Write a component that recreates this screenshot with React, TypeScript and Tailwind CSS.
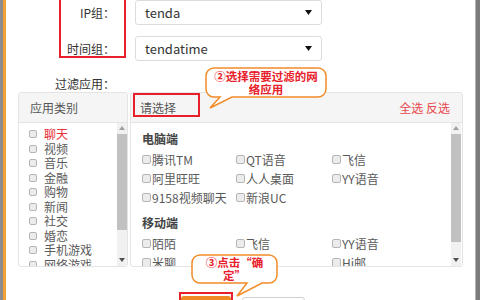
import React from "react";

const pcApps = [
  ["腾讯TM", "QT语音", "飞信"],
  ["阿里旺旺", "人人桌面", "YY语音"],
  ["9158视频聊天", "新浪UC", ""],
];

const mobileApps = [
  ["陌陌", "飞信", "YY语音"],
  ["米聊", "", "Hi邮"],
];

const categories = ["聊天", "视频", "音乐", "金融", "购物", "新闻", "社交", "婚恋", "手机游戏", "网络游戏"];

function Box({ small }: { small?: boolean }) {
  return (
    <span
      className={`inline-block flex-shrink-0 border border-[#b5b5b5] bg-[#ececec] rounded-[2px] ${
        small ? "w-[8px] h-[8px]" : "w-[9px] h-[9px]"
      }`}
    />
  );
}

function Select({ value }: { value: string }) {
  return (
    <div className="ml-[20px] w-[187px] h-[25px] border border-[#dcdcdc] rounded-[3px] px-[9px] flex items-center justify-between text-[13px] text-[#333]">
      <span>{value}</span>
      <svg width="7" height="5" viewBox="0 0 7 5">
        <path d="M0 0 H7 L3.5 5 Z" fill="#111" />
      </svg>
    </div>
  );
}

function ScrollBar({ thumbTop, thumbH }: { thumbTop: number; thumbH: number }) {
  return (
    <div className="relative w-[10px] h-full bg-[#f1f1f1]">
      <svg className="absolute left-[2px] top-[3px]" width="6" height="4" viewBox="0 0 6 4">
        <path d="M0 4 H6 L3 0 Z" fill="#a0a0a0" />
      </svg>
      <div className="absolute left-0 w-[10px] bg-[#c1c1c1]" style={{ top: thumbTop, height: thumbH }} />
      <svg className="absolute left-[2px] bottom-[4px]" width="6" height="4" viewBox="0 0 6 4">
        <path d="M0 0 H6 L3 4 Z" fill="#505050" />
      </svg>
    </div>
  );
}

function AppRows({ rows }: { rows: string[][] }) {
  return (
    <div className="mt-[3px]">
      {rows.map((row, r) => (
        <div key={r} className="flex h-[19px] items-center">
          {row.map((a, i) => (
            <div key={i} className={`flex items-center gap-[1px] ${i === 0 ? "w-[94px]" : "w-[96px]"}`}>
              {a && <Box />}
              <span>{a}</span>
            </div>
          ))}
        </div>
      ))}
    </div>
  );
}

export default function App() {
  return (
    <div className="relative w-[480px] h-[300px] overflow-hidden flex bg-white font-['Noto_Sans_CJK_SC','Liberation_Sans',sans-serif]">
      <div className="w-[3px] bg-[#8c8c8c]" />
      <div className="w-[3px] bg-[#f0a035]" />

      {/* Form */}
      <div className="flex-1 flex flex-col">
        <div className="flex items-center h-[25px]">
          <div className="w-[109px] text-right text-[12px] text-[#333]">IP组：</div>
          <Select value="tenda" />
        </div>
        <div className="flex items-center h-[25px] mt-[11px]">
          <div className="w-[109px] text-right text-[12px] text-[#333]">时间组：</div>
          <Select value="tendatime" />
        </div>
        <div className="mt-[16px] h-[14px] w-[109px] text-right text-[12px] leading-[14px] text-[#333]">过滤应用：</div>

        <div className="flex ml-[12px] mt-[1px] h-[175px]">
          {/* Categories */}
          <div className="w-[110px] border border-[#e4e4e4] rounded-[3px] flex flex-col overflow-hidden">
            <div className="h-[30px] flex-shrink-0 bg-[#f5f5f5] border-b border-[#e4e4e4] flex items-center pl-[11px] text-[12px] text-[#555]">
              应用类别
            </div>
            <div className="flex flex-1 min-h-0">
              <div className="flex-1 pl-[10px] pt-[4px] overflow-hidden">
                {categories.map((c, i) => (
                  <div key={c} className="h-[14.5px] flex items-center gap-[7px]">
                    <Box small />
                    <span className={`text-[12px] leading-[14px] ${i === 0 ? "text-[#e8303a]" : "text-[#5a5a5a]"}`}>{c}</span>
                  </div>
                ))}
              </div>
              <ScrollBar thumbTop={11} thumbH={96} />
            </div>
          </div>

          {/* Apps */}
          <div className="w-[333px] ml-[2px] border border-[#e4e4e4] rounded-[3px] flex flex-col overflow-hidden">
            <div className="h-[30px] flex-shrink-0 bg-[#f5f5f5] border-b border-[#e4e4e4] flex items-center justify-between pl-[9px] pr-[12px] text-[12px]">
              <span className="text-[#555]">请选择</span>
              <span className="text-[#e8474b]">全选 反选</span>
            </div>
            <div className="flex flex-1 min-h-0">
              <div className="flex-1 pl-[11px] pt-[8px] overflow-hidden text-[12px] text-[#5a5a5a]">
                <div className="h-[16px] leading-[16px] font-bold text-[#444]">电脑端</div>
                <AppRows rows={pcApps} />
                <div className="mt-[8px] h-[16px] leading-[16px] font-bold text-[#444]">移动端</div>
                <AppRows rows={mobileApps} />
              </div>
              <div className="mr-[1px] h-full">
                <ScrollBar thumbTop={11} thumbH={108} />
              </div>
            </div>
          </div>
        </div>

        {/* Buttons */}
        <div className="flex mt-[29px] ml-[175px]">
          <div className="w-[50px] h-[24px] bg-[#f08a24] rounded-[3px]" />
          <div className="w-[63px] h-[24px] ml-[11px] mt-[1px] border border-[#d0d0d0] rounded-[3px] bg-white" />
        </div>
      </div>

      <div className="w-[1px] bg-[#b4b4b4]" />
      <div className="w-[4px] bg-[#7c7c7c]" />

      {/* Annotations */}
      <div className="absolute left-[59px] top-[-6px] w-[67px] h-[64px] border-2 border-[#e8202a]" />
      <div className="absolute left-[133px] top-[93px] w-[67px] h-[24px] border-2 border-[#e8202a]" />
      <div className="absolute left-[179px] top-[292px] w-[54px] h-[20px] border-2 border-[#e8202a]" />

      <svg className="absolute left-0 top-0 pointer-events-none" width="480" height="300" viewBox="0 0 480 300">
        <path
          d="M214,68 H318 A8,8 0 0 1 326,76 V89 A8,8 0 0 1 318,97 H232 L210,108 L220,97 H214 A8,8 0 0 1 206,89 V76 A8,8 0 0 1 214,68 Z"
          fill="#fff"
          stroke="#f28c28"
          strokeWidth="1.5"
        />
        <path
          d="M200,255 H269 A8,8 0 0 1 277,263 V275 A8,8 0 0 1 269,283 H262 L237,296 L247,283 H200 A8,8 0 0 1 192,275 V263 A8,8 0 0 1 200,255 Z"
          fill="#fff"
          stroke="#f28c28"
          strokeWidth="1.5"
        />
      </svg>
      <div className="absolute left-[206px] top-[70px] w-[120px] text-center text-[11.5px] leading-[13px] font-bold text-[#e8202a]">
        ②选择需要过滤的网
        <br />
        络应用
      </div>
      <div className="absolute left-[192px] top-[256px] w-[85px] text-center text-[11.5px] leading-[13px] font-bold text-[#e8202a]">
        ③点击“确
        <br />
        定”
      </div>
    </div>
  );
}
